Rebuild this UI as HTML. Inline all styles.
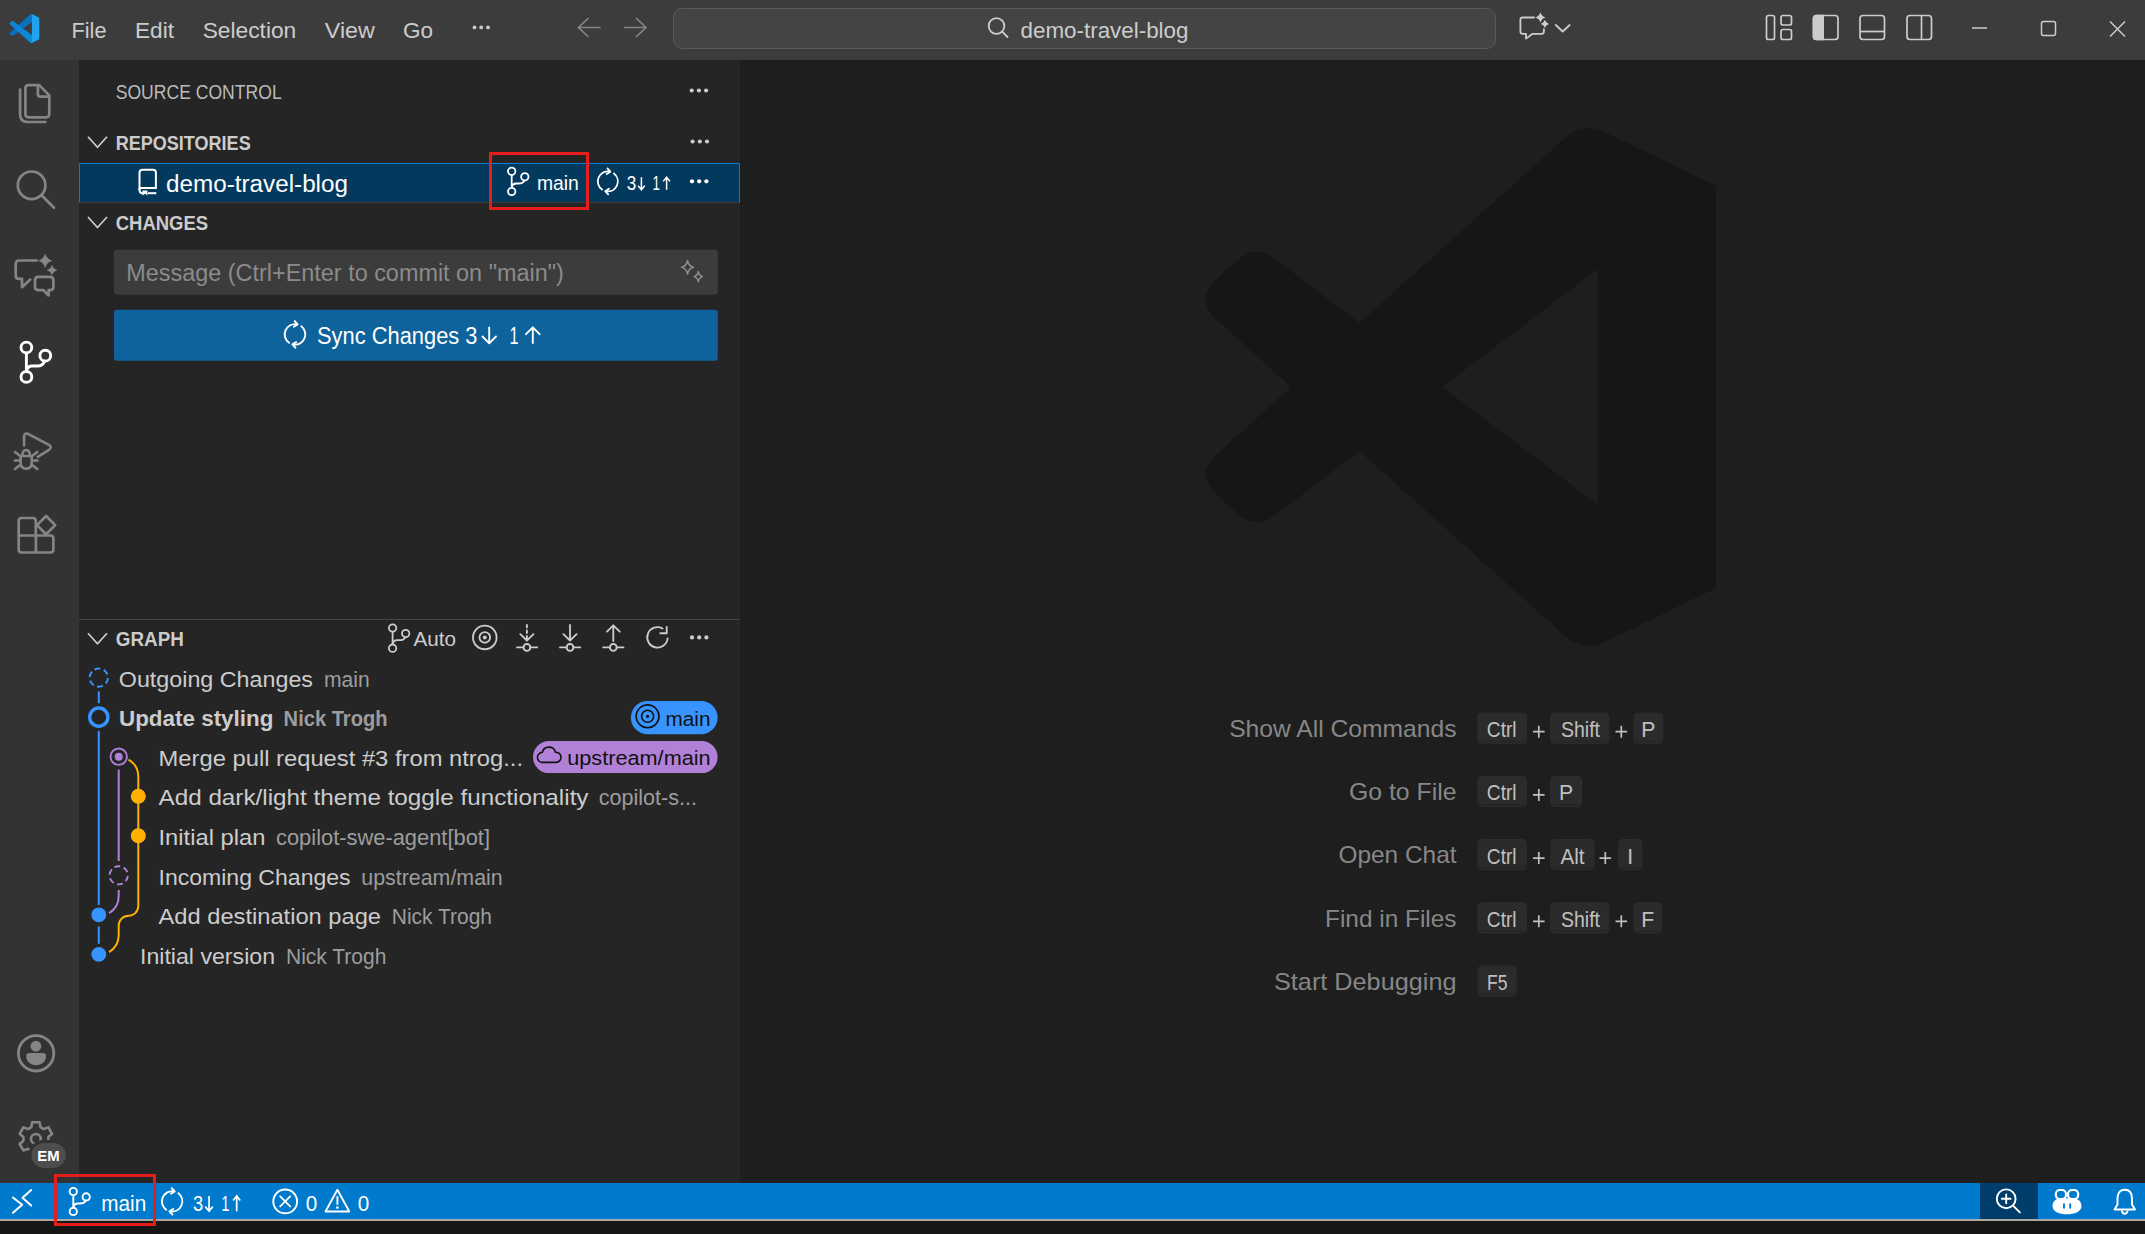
<!DOCTYPE html>
<html><head><meta charset="utf-8"><title>demo-travel-blog - Visual Studio Code</title>
<style>html,body{margin:0;padding:0;background:#161616;overflow:hidden;width:2145px;height:1234px}
svg{display:block} text{font-family:"Liberation Sans", sans-serif;white-space:pre}</style></head>
<body><svg width="2145" height="1234" viewBox="0 0 2145 1234">
<rect x="0" y="0" width="2145" height="1234" fill="#161616" rx="0" />
<rect x="0" y="0" width="2145" height="60" fill="#3c3c3c" rx="0" />
<rect x="0" y="60" width="79" height="1123" fill="#333333" rx="0" />
<rect x="79" y="60" width="661" height="1123" fill="#252526" rx="0" />
<rect x="740" y="60" width="1405" height="1123" fill="#1e1e1e" rx="0" />
<rect x="0" y="1183" width="2145" height="36" fill="#007acc" rx="0" />
<rect x="0" y="1219" width="2145" height="2" fill="#aca8a4" rx="0" />
<g transform="translate(9.7,14) scale(0.296,0.29)"><path d="M96.46 10.8L75.86.88C73.47-.27 70.62.21 68.75 2.08L1.3 63.58c-1.82 1.66-1.81 4.51 0 6.17l5.51 5.01c1.49 1.35 3.72 1.45 5.32.24L93.36 13.37C96.09 11.3 100 13.25 100 16.67v-.24c0-2.4-1.38-4.59-3.54-5.63z" fill="#0a70be"/><path d="M96.46 89.2L75.86 99.12c-2.39 1.15-5.24.67-7.11-1.2L1.3 36.42c-1.82-1.66-1.81-4.51 0-6.17l5.51-5.01c1.49-1.35 3.72-1.45 5.32-.24l81.23 61.62c2.73 2.07 6.64.12 6.64-3.29v.24c0 2.4-1.38 4.59-3.54 5.63z" fill="#0a88d6"/><path d="M75.86 99.13c-2.39 1.15-5.24.66-7.11-1.21C71.06 100.22 75 98.59 75 95.33V4.67c0-3.26-3.94-4.89-6.25-2.59 1.87-1.87 4.72-2.36 7.11-1.21l20.6 9.91A6.25 6.25 0 0 1 100 16.41v67.18c0 2.4-1.38 4.59-3.54 5.63l-20.6 9.91z" fill="#21a3ef"/></g>
<text x="71.5" y="38" font-size="22" fill="#cccccc" textLength="35" lengthAdjust="spacingAndGlyphs" >File</text>
<text x="135" y="38" font-size="22" fill="#cccccc" textLength="39" lengthAdjust="spacingAndGlyphs" >Edit</text>
<text x="202.7" y="38" font-size="22" fill="#cccccc" textLength="93.6" lengthAdjust="spacingAndGlyphs" >Selection</text>
<text x="324.8" y="38" font-size="22" fill="#cccccc" textLength="50" lengthAdjust="spacingAndGlyphs" >View</text>
<text x="403" y="38" font-size="22" fill="#cccccc" textLength="30" lengthAdjust="spacingAndGlyphs" >Go</text>
<circle cx="474.5" cy="27.4" r="1.9" fill="#cccccc"/>
<circle cx="481.2" cy="27.4" r="1.9" fill="#cccccc"/>
<circle cx="488" cy="27.4" r="1.9" fill="#cccccc"/>
<g stroke="#858585" stroke-width="1.7" fill="none" stroke-linecap="round"><path d="M578.5 27.5H600M588 18.5L578.5 27.5L588 36.5"/><path d="M646 27.5H624.5M636.5 18.5L646 27.5L636.5 36.5"/></g>
<rect x="673.5" y="8.5" width="822" height="40" fill="#444444" rx="9" stroke="#5a5a5a" stroke-width="1"/>
<g stroke="#cccccc" stroke-width="1.8" fill="none" stroke-linecap="round"><circle cx="996.5" cy="26" r="7.8"/><path d="M1002.2 31.7L1007.5 37"/></g>
<text x="1020.5" y="37.6" font-size="22" fill="#cccccc" textLength="168" lengthAdjust="spacingAndGlyphs" >demo-travel-blog</text>
<g stroke="#cccccc" stroke-width="1.8" fill="none" stroke-linejoin="round" stroke-linecap="round"><path d="M1534 17.5H1522.6Q1520.4 17.5 1520.4 19.7V31.6Q1520.4 33.8 1522.6 33.8H1526V38.6L1532.5 33.8H1541.7Q1543.9 33.8 1543.9 31.6V29.2"/><path d="M1555.7 25L1562.7 31.5L1569.7 25"/></g>
<path d="M1540.4 12.3Q1541.544 16.356 1545.6000000000001 17.5Q1541.544 18.644 1540.4 22.7Q1539.256 18.644 1535.2 17.5Q1539.256 16.356 1540.4 12.3Z" fill="#cccccc"/>
<path d="M1544.9 19.799999999999997Q1545.8020000000001 22.997999999999998 1549.0 23.9Q1545.8020000000001 24.802 1544.9 28.0Q1543.998 24.802 1540.8000000000002 23.9Q1543.998 22.997999999999998 1544.9 19.799999999999997Z" fill="#cccccc"/>
<g stroke="#cccccc" stroke-width="1.7" fill="none"><rect x="1766.5" y="15.5" width="8" height="24" rx="2"/><rect x="1781" y="15.5" width="10.5" height="9.5" rx="2"/><rect x="1781" y="29.5" width="10.5" height="10" rx="2"/><rect x="1813.5" y="15.5" width="24.5" height="24" rx="3"/><rect x="1860" y="15.5" width="24.5" height="24" rx="3"/><path d="M1860 31.5H1884.5"/><rect x="1907" y="15.5" width="24.5" height="24" rx="3"/><path d="M1921.5 15.5V39.5"/></g>
<path d="M1824 14.65H1816.65Q1812.65 14.65 1812.65 18.65V36.35Q1812.65 40.35 1816.65 40.35H1824Z" fill="#cccccc"/>
<g stroke="#cccccc" stroke-width="1.5" fill="none"><path d="M1972 28H1987"/><rect x="2041.5" y="21.5" width="14" height="14" rx="2"/><path d="M2110 21.5L2125 36.5M2125 21.5L2110 36.5"/></g>
<g stroke="#858585" stroke-width="2.7" fill="none" stroke-linejoin="round" stroke-linecap="round">
<path d="M39.2 85.1H28.6Q25.4 85.1 25.4 88.3V114.1Q25.4 117.3 28.6 117.3H46.1Q49.3 117.3 49.3 114.1V95.4L39.2 85.1Z"/>
<path d="M37.9 85.5V94Q37.9 96.6 40.5 96.6H49"/>
<path d="M20.1 89.6V114.5Q20.1 122 27.6 122H45.3"/>
<circle cx="31.6" cy="185.3" r="13.8"/><path d="M41.5 195.3L54 207.8"/>
<path d="M36.6 260.5H19.2Q15.7 260.5 15.7 264V275.4Q15.7 278.9 19.2 278.9H22V287.2L30.2 279.6"/>
<path d="M38.5 276.8H50Q53.4 276.8 53.4 280.2V286.8Q53.4 290.2 50 290.2H48.6L48.6 295.5L43.5 290.2H38.5Q35 290.2 35 286.8V280.2Q35 276.8 38.5 276.8Z"/>
</g>
<path d="M45.2 253.39999999999998Q46.660000000000004 259.24 52.5 260.7Q46.660000000000004 262.15999999999997 45.2 268.0Q43.74 262.15999999999997 37.900000000000006 260.7Q43.74 259.24 45.2 253.39999999999998Z" fill="#858585"/>
<path d="M52 264.59999999999997Q53.12 269.08 57.6 270.2Q53.12 271.32 52 275.8Q50.88 271.32 46.4 270.2Q50.88 269.08 52 264.59999999999997Z" fill="#858585"/>
<g stroke="#ffffff" stroke-width="2.9" fill="none" stroke-linecap="round"><circle cx="26.4" cy="347.5" r="5.4"/><circle cx="26.4" cy="376.9" r="5.4"/><circle cx="45.3" cy="355.7" r="5.4"/><path d="M26.4 353V371.5"/><path d="M44.6 361Q43 366 37.5 366H32Q28 366 26.4 370.5"/></g>
<g stroke="#858585" stroke-width="2.6" fill="none" stroke-linejoin="round" stroke-linecap="round"><path d="M24.1 445.5V436.5Q24.1 432.5 28 433.8L49 444.8Q52.5 447.3 49 449.8L37.8 456.8"/><path d="M20.6 456V462.5Q20.6 468.6 26.1 468.6Q31.7 468.6 31.7 462.5V456Z"/><path d="M22.5 455.5Q22.5 450 26.1 450Q29.8 450 29.8 455.5"/><path d="M15 452L19.5 455.5M37.3 452L32.8 455.5M14.8 460.5H19.5M32.8 460.5H37.5M15 469L19.5 465.5M37.3 469L32.8 465.5"/></g>
<g stroke="#858585" stroke-width="2.7" fill="none" stroke-linejoin="round"><path d="M35.8 535.5V521Q35.8 518 32.8 518H21.7Q18.7 518 18.7 521V549.5Q18.7 552.5 21.7 552.5H50.4Q53.4 552.5 53.4 549.5V538.5Q53.4 535.5 50.4 535.5H18.7"/><path d="M35.9 535.5V552.5"/><path d="M46.1 516L55.2 525.1L46.1 534.2L37 525.1Z"/></g>
<circle cx="36.1" cy="1053.3" r="17.7" stroke="#858585" stroke-width="2.8" fill="none"/>
<circle cx="35.9" cy="1046.2" r="5.4" fill="#858585"/>
<path d="M26.2 1056Q26.2 1053 29.2 1053H43Q46 1053 46 1056C46 1062 41.5 1065.2 36.1 1065.2C30.7 1065.2 26.2 1062 26.2 1056Z" fill="#858585"/>
<path d="M31.26 1127.18 L32.19 1122.31 L39.61 1122.31 L40.54 1127.18 L43.73 1129.03 L48.41 1127.39 L52.12 1133.82 L48.36 1137.06 L48.36 1140.74 L52.12 1143.98 L48.41 1150.41 L43.73 1148.77 L40.54 1150.62 L39.61 1155.49 L32.19 1155.49 L31.26 1150.62 L28.07 1148.77 L23.39 1150.41 L19.68 1143.98 L23.44 1140.74 L23.44 1137.06 L19.68 1133.82 L23.39 1127.39 L28.07 1129.03Z" stroke="#858585" stroke-width="2.6" fill="none" stroke-linejoin="round"/>
<circle cx="35.9" cy="1138.9" r="4.9" stroke="#858585" stroke-width="2.6" fill="none"/>
<rect x="29.9" y="1141.4" width="37.4" height="28" rx="14" fill="#4d4d4d" stroke="#333333" stroke-width="3"/>
<rect x="31.4" y="1143" width="34.4" height="25" rx="12" fill="#333333" opacity="0"/>
<text x="37.3" y="1161" font-size="15.5" fill="#ffffff" font-weight="700" textLength="22.3" lengthAdjust="spacingAndGlyphs" >EM</text>
<text x="115.7" y="99.1" font-size="20.8" fill="#bbbbbb" textLength="166" lengthAdjust="spacingAndGlyphs" >SOURCE CONTROL</text>
<circle cx="691.7" cy="90.5" r="2.1" fill="#cccccc"/>
<circle cx="698.9" cy="90.5" r="2.1" fill="#cccccc"/>
<circle cx="706.1" cy="90.5" r="2.1" fill="#cccccc"/>
<path d="M88.0 136.7L97.5 147.3L107.0 136.7" stroke="#cccccc" stroke-width="1.7" fill="none"/>
<text x="115.7" y="149.7" font-size="20.3" fill="#cccccc" font-weight="700" textLength="135" lengthAdjust="spacingAndGlyphs" >REPOSITORIES</text>
<circle cx="692.6" cy="141.5" r="2.1" fill="#cccccc"/>
<circle cx="699.8" cy="141.5" r="2.1" fill="#cccccc"/>
<circle cx="707.0" cy="141.5" r="2.1" fill="#cccccc"/>
<rect x="79" y="163" width="661" height="39" fill="#04395e" rx="0" />
<path d="M79.5 202V163.5H739.5V202" fill="none" stroke="#007fd4" stroke-width="1"/>
<rect x="79" y="202" width="661" height="1" fill="#3d3a38" rx="0" />
<g stroke="#ffffff" stroke-width="2" fill="none"><path d="M139.5 190V172.7Q139.5 169.7 142.5 169.7H152.9Q155.9 169.7 155.9 172.7V187.9H139.5"/><path d="M139.5 188V190Q139.5 193.2 142.7 193.2"/><path d="M148 193.2H156.3"/></g>
<path d="M142.4 190.6H147.5V195.5L145 193.8L142.4 195.5Z" fill="#ffffff"/>
<text x="166" y="192" font-size="23" fill="#ffffff" textLength="182" lengthAdjust="spacingAndGlyphs" >demo-travel-blog</text>
<g stroke="#ffffff" stroke-width="1.8" fill="none"><circle cx="511.7" cy="171.3" r="3.7"/><circle cx="511.7" cy="191.5" r="3.7"/><circle cx="524.8" cy="176.8" r="3.7"/><path d="M511.7 175.0V187.8"/><path d="M524.3 180.5Q523.5 183.5 518.2 183.5H516.2Q512.7 183.5 511.7 186.8"/></g>
<text x="536.9" y="189.8" font-size="19.5" fill="#ffffff" textLength="42" lengthAdjust="spacingAndGlyphs" >main</text>
<g stroke="#ffffff" stroke-width="1.8" fill="none" stroke-linecap="round" stroke-linejoin="round"><path d="M602.06 189.59A10 10 0 0 1 609.19 171.50"/><path d="M607.44 168.39L610.38 171.66L606.65 174.00"/><path d="M613.96 173.52A10 10 0 0 1 606.41 191.30"/><path d="M608.16 194.41L605.22 191.14L608.95 188.80"/></g>
<text x="626.7" y="189.8" font-size="19.5" fill="#ffffff" textLength="9.5" lengthAdjust="spacingAndGlyphs" >3</text>
<text x="652.5" y="189.8" font-size="19.5" fill="#ffffff" textLength="7.5" lengthAdjust="spacingAndGlyphs" >1</text>
<path d="M641.40 177.2V189.20000000000002M638 185.60000000000002L641.40 189.8L644.8 185.60000000000002M666.60 189.8V177.79999999999998M663.2 181.39999999999998L666.60 177.2L670 181.39999999999998" stroke="#ffffff" stroke-width="1.5" fill="none" stroke-linecap="butt" stroke-linejoin="miter"/>
<circle cx="692.0" cy="181.3" r="2.1" fill="#ffffff"/>
<circle cx="699.2" cy="181.3" r="2.1" fill="#ffffff"/>
<circle cx="706.4" cy="181.3" r="2.1" fill="#ffffff"/>
<rect x="490.5" y="153.5" width="97" height="55" fill="none" stroke="#e51d1d" stroke-width="3"/>
<path d="M88.0 217.0L97.5 227.60000000000002L107.0 217.0" stroke="#cccccc" stroke-width="1.7" fill="none"/>
<text x="115.7" y="230" font-size="20.3" fill="#cccccc" font-weight="700" textLength="92.5" lengthAdjust="spacingAndGlyphs" >CHANGES</text>
<rect x="114" y="249.8" width="603.8" height="45" fill="#3c3c3c" rx="3" />
<text x="126.3" y="281.2" font-size="23.5" fill="#8b8b8b" textLength="437.5" lengthAdjust="spacingAndGlyphs" >Message (Ctrl+Enter to commit on &quot;main&quot;)</text>
<path d="M686.5 260.5Q688.18 264.82 692.5 266.5Q688.18 268.18 686.5 272.5Q684.82 268.18 680.5 266.5Q684.82 264.82 686.5 260.5Z" fill="none"/>
<g stroke="#8b8b8b" stroke-width="1.5" fill="none" stroke-linejoin="round"><path d="M687.5 260.5Q688.5 266 693.5 267.3Q688.5 268.6 687.5 274Q686.5 268.6 681.5 267.3Q686.5 266 687.5 260.5Z"/><path d="M698.3 271.5Q699 275.5 702.5 276.6Q699 277.7 698.3 281.7Q697.6 277.7 694.1 276.6Q697.6 275.5 698.3 271.5Z"/></g>
<rect x="114" y="309.7" width="603.8" height="51.1" fill="#0e639c" rx="3" />
<g stroke="#ffffff" stroke-width="1.9" fill="none" stroke-linecap="round" stroke-linejoin="round"><path d="M289.09 342.84A10.3 10.3 0 0 1 296.43 324.20"/><path d="M294.68 321.10L297.62 324.37L293.89 326.70"/><path d="M301.34 326.28A10.3 10.3 0 0 1 293.57 344.60"/><path d="M295.32 347.70L292.38 344.43L296.11 342.10"/></g>
<text x="317" y="344.3" font-size="23.5" fill="#ffffff" textLength="160.5" lengthAdjust="spacingAndGlyphs" >Sync Changes 3</text>
<g stroke="#ffffff" stroke-width="1.9" fill="none" stroke-linecap="round" stroke-linejoin="round"><path d="M489.2 327.5V343M482.5 336.5L489.2 343.3L496 336.5"/><path d="M532.8 343V327.5M526 334.2L532.8 327.3L539.6 334.2"/></g>
<text x="509.4" y="344.3" font-size="23.5" fill="#ffffff" textLength="9" lengthAdjust="spacingAndGlyphs" >1</text>
<rect x="79" y="619" width="661" height="1" fill="#454545" rx="0" />
<path d="M88.0 633.2L97.5 643.8L107.0 633.2" stroke="#cccccc" stroke-width="1.7" fill="none"/>
<text x="115.8" y="646.2" font-size="20.3" fill="#cccccc" font-weight="700" textLength="68" lengthAdjust="spacingAndGlyphs" >GRAPH</text>
<g stroke="#cccccc" stroke-width="1.8" fill="none"><circle cx="392.6" cy="628" r="3.7"/><circle cx="392.6" cy="648.2" r="3.7"/><circle cx="405.70000000000005" cy="633.5" r="3.7"/><path d="M392.6 631.7V644.5"/><path d="M405.20000000000005 637.2Q404.40000000000003 640.2 399.1 640.2H397.1Q393.6 640.2 392.6 643.5"/></g>
<text x="413.6" y="646" font-size="20.6" fill="#cccccc" textLength="42.5" lengthAdjust="spacingAndGlyphs" >Auto</text>
<g stroke="#cccccc" stroke-width="1.85" fill="none" stroke-linecap="round" stroke-linejoin="round"><circle cx="484.8" cy="637.4" r="11.8"/><circle cx="484.8" cy="637.4" r="5.3"/><path d="M526.9 625V627.5M526.9 630.5V633M526.9 636V640.3M520.3 634.2L526.9 640.5L533.5 634.2"/><circle cx="526.9" cy="647.4" r="3.4"/><path d="M517 647.4H523.5M530.3 647.4H537.2"/><path d="M570 625V640.3M563.4 634.2L570 640.5L576.6 634.2"/><circle cx="570" cy="647.4" r="3.4"/><path d="M560 647.4H566.6M573.4 647.4H580.2"/><path d="M613.3 641V625.5M607 631.7L613.3 625.3L619.7 631.7"/><circle cx="613.3" cy="647.4" r="3.4"/><path d="M603.2 647.4H609.9M616.7 647.4H623.5"/><path d="M662.5 628.5A10.2 10.2 0 1 0 667.6 638.5"/><path d="M660.3 633.2H666.7V626.8"/></g>
<circle cx="484.8" cy="637.4" r="2" fill="#cccccc"/>
<circle cx="692.0" cy="637.4" r="2.1" fill="#cccccc"/>
<circle cx="699.2" cy="637.4" r="2.1" fill="#cccccc"/>
<circle cx="706.4" cy="637.4" r="2.1" fill="#cccccc"/>
<g fill="none" stroke-width="2">
<path d="M98.8 691.5V703.2" stroke="#3794ff"/>
<path d="M98.8 731V905M98.8 926.5V943.8" stroke="#3794ff"/>
<path d="M118.7 769.5V861M118.7 890V895.7A19.9 19.9 0 0 1 109.05 913.1" stroke="#b180d7"/>
<path d="M128.5 759.6A19.6 19.6 0 0 1 138.3 776.6V906A9.7 9.7 0 0 1 128.6 915.7A9.9 9.9 0 0 0 118.7 925.6V935A19.9 19.9 0 0 1 109.05 952.06" stroke="#ffb000"/>
</g>
<circle cx="98.8" cy="677.6" r="9.1" fill="none" stroke="#3794ff" stroke-width="2" stroke-dasharray="5.9 3.63" transform="rotate(-118 98.8 677.6)"/>
<circle cx="98.8" cy="717.14" r="9.1" fill="#252526" stroke="#3794ff" stroke-width="3.4"/>
<circle cx="118.7" cy="756.6800000000001" r="8.2" fill="#252526" stroke="#b180d7" stroke-width="1.9"/>
<circle cx="118.7" cy="756.6800000000001" r="4" fill="#b180d7"/>
<circle cx="138.3" cy="796.22" r="7.5" fill="#ffb000"/>
<circle cx="138.3" cy="835.76" r="7.5" fill="#ffb000"/>
<circle cx="118.7" cy="875.3" r="9.1" fill="none" stroke="#b180d7" stroke-width="1.9" stroke-dasharray="5.9 3.63" transform="rotate(-118 118.7 875.3)"/>
<circle cx="98.8" cy="914.84" r="7.4" fill="#3794ff"/>
<circle cx="98.8" cy="954.38" r="7.4" fill="#3794ff"/>
<text x="118.8" y="686.8000000000001" font-size="22.7" fill="#cccccc" textLength="194.2" lengthAdjust="spacingAndGlyphs" >Outgoing Changes</text>
<text x="324" y="686.8000000000001" font-size="22.7" fill="#9d9d9d" textLength="45.7" lengthAdjust="spacingAndGlyphs" >main</text>
<text x="119" y="726.34" font-size="22.7" fill="#cccccc" font-weight="700" textLength="154.4" lengthAdjust="spacingAndGlyphs" >Update styling</text>
<text x="283.6" y="726.34" font-size="22.7" fill="#9d9d9d" font-weight="700" textLength="104" lengthAdjust="spacingAndGlyphs" >Nick Trogh</text>
<text x="158.5" y="765.8800000000001" font-size="22.7" fill="#cccccc" textLength="364.5" lengthAdjust="spacingAndGlyphs" >Merge pull request #3 from ntrog...</text>
<text x="158.5" y="805.4200000000001" font-size="22.7" fill="#cccccc" textLength="430" lengthAdjust="spacingAndGlyphs" >Add dark/light theme toggle functionality</text>
<text x="598.7" y="805.4200000000001" font-size="22.7" fill="#9d9d9d" textLength="98.3" lengthAdjust="spacingAndGlyphs" >copilot-s...</text>
<text x="158.5" y="844.96" font-size="22.7" fill="#cccccc" textLength="107" lengthAdjust="spacingAndGlyphs" >Initial plan</text>
<text x="276" y="844.96" font-size="22.7" fill="#9d9d9d" textLength="214" lengthAdjust="spacingAndGlyphs" >copilot-swe-agent[bot]</text>
<text x="158.5" y="884.5" font-size="22.7" fill="#cccccc" textLength="192.1" lengthAdjust="spacingAndGlyphs" >Incoming Changes</text>
<text x="361.3" y="884.5" font-size="22.7" fill="#9d9d9d" textLength="141.4" lengthAdjust="spacingAndGlyphs" >upstream/main</text>
<text x="158.5" y="924.0400000000001" font-size="22.7" fill="#cccccc" textLength="222.5" lengthAdjust="spacingAndGlyphs" >Add destination page</text>
<text x="391.8" y="924.0400000000001" font-size="22.7" fill="#9d9d9d" textLength="100.2" lengthAdjust="spacingAndGlyphs" >Nick Trogh</text>
<text x="140" y="963.58" font-size="22.7" fill="#cccccc" textLength="135" lengthAdjust="spacingAndGlyphs" >Initial version</text>
<text x="286" y="963.58" font-size="22.7" fill="#9d9d9d" textLength="100.4" lengthAdjust="spacingAndGlyphs" >Nick Trogh</text>
<rect x="630.9" y="701" width="86.7" height="33.2" fill="#3794ff" rx="16.6" />
<g stroke="#111111" stroke-width="1.6" fill="none"><circle cx="647.6" cy="716.3" r="11.4"/><circle cx="647.6" cy="716.3" r="6"/></g>
<circle cx="647.6" cy="716.3" r="1.6" fill="#111111"/>
<text x="665.5" y="725.7" font-size="20.5" fill="#111111" textLength="45" lengthAdjust="spacingAndGlyphs" >main</text>
<rect x="533" y="741" width="184.6" height="32.1" fill="#b180d7" rx="16" />
<path d="M542.5 762.4A5 5 0 0 1 542.3 752.4A6.8 6.8 0 0 1 555.5 752.2A5.1 5.1 0 0 1 556.3 762.4Z" fill="none" stroke="#111111" stroke-width="1.6" stroke-linejoin="round"/>
<text x="567.2" y="765.4" font-size="20.5" fill="#111111" textLength="143.5" lengthAdjust="spacingAndGlyphs" >upstream/main</text>
<path fill="#161616" fill-rule="evenodd" d="M1716 186L1716 588L1605.9 641.5Q1583.5 652.5 1564.9 635.8L1359.5 451L1275.5 515.1Q1255.6 530.3 1237.1 513.4L1216.6 494.5Q1194.5 474.3 1216.7 454.2L1291 387L1216.7 319.8Q1194.5 299.7 1216.6 279.5L1237.1 260.6Q1255.6 243.7 1275.5 258.9L1359.5 323L1564.9 138.2Q1583.5 121.5 1605.9 132.5Z M1598 269L1442 387L1598 505Z"/>
<text x="1456.5" y="736.9" font-size="24" fill="#878787" text-anchor="end" textLength="227.3" lengthAdjust="spacingAndGlyphs" >Show All Commands</text>
<rect x="1477.8" y="713.2" width="48.600000000000136" height="30" rx="4" fill="#262626" stroke="#303030" stroke-width="1"/>
<rect x="1478.3" y="713.7" width="47.600000000000136" height="27" rx="3.5" fill="#2b2b2b"/>
<text x="1486.8" y="737.2" font-size="21.2" fill="#c0c0c0" textLength="29.8" lengthAdjust="spacingAndGlyphs" >Ctrl</text>
<path d="M1533 731.6999999999999H1544.6M1538.8 725.6999999999999V737.6999999999999" stroke="#c0c0c0" stroke-width="1.7"/>
<rect x="1550.7" y="713.2" width="58.200000000000045" height="30" rx="4" fill="#262626" stroke="#303030" stroke-width="1"/>
<rect x="1551.2" y="713.7" width="57.200000000000045" height="27" rx="3.5" fill="#2b2b2b"/>
<text x="1560.9" y="737.2" font-size="21.2" fill="#c0c0c0" textLength="39.1" lengthAdjust="spacingAndGlyphs" >Shift</text>
<path d="M1615.5 731.6999999999999H1627.1M1621.3 725.6999999999999V737.6999999999999" stroke="#c0c0c0" stroke-width="1.7"/>
<rect x="1633.9" y="713.2" width="28.799999999999955" height="30" rx="4" fill="#262626" stroke="#303030" stroke-width="1"/>
<rect x="1634.4" y="713.7" width="27.799999999999955" height="27" rx="3.5" fill="#2b2b2b"/>
<text x="1648.3000000000002" y="737.2" font-size="21.2" fill="#c0c0c0" text-anchor="middle" >P</text>
<text x="1456.5" y="800.1" font-size="24" fill="#878787" text-anchor="end" textLength="107.6" lengthAdjust="spacingAndGlyphs" >Go to File</text>
<rect x="1477.8" y="776.4000000000001" width="48.600000000000136" height="30" rx="4" fill="#262626" stroke="#303030" stroke-width="1"/>
<rect x="1478.3" y="776.9000000000001" width="47.600000000000136" height="27" rx="3.5" fill="#2b2b2b"/>
<text x="1486.8" y="800.4000000000001" font-size="21.2" fill="#c0c0c0" textLength="29.8" lengthAdjust="spacingAndGlyphs" >Ctrl</text>
<path d="M1533 794.9H1544.6M1538.8 788.9V800.9" stroke="#c0c0c0" stroke-width="1.7"/>
<rect x="1550.7" y="776.4000000000001" width="30.799999999999955" height="30" rx="4" fill="#262626" stroke="#303030" stroke-width="1"/>
<rect x="1551.2" y="776.9000000000001" width="29.799999999999955" height="27" rx="3.5" fill="#2b2b2b"/>
<text x="1566.1" y="800.4000000000001" font-size="21.2" fill="#c0c0c0" text-anchor="middle" >P</text>
<text x="1456.5" y="863.3" font-size="24" fill="#878787" text-anchor="end" textLength="118" lengthAdjust="spacingAndGlyphs" >Open Chat</text>
<rect x="1477.8" y="839.6" width="48.600000000000136" height="30" rx="4" fill="#262626" stroke="#303030" stroke-width="1"/>
<rect x="1478.3" y="840.1" width="47.600000000000136" height="27" rx="3.5" fill="#2b2b2b"/>
<text x="1486.8" y="863.6" font-size="21.2" fill="#c0c0c0" textLength="29.8" lengthAdjust="spacingAndGlyphs" >Ctrl</text>
<path d="M1533 858.0999999999999H1544.6M1538.8 852.0999999999999V864.0999999999999" stroke="#c0c0c0" stroke-width="1.7"/>
<rect x="1551.0" y="839.6" width="43.0" height="30" rx="4" fill="#262626" stroke="#303030" stroke-width="1"/>
<rect x="1551.5" y="840.1" width="42.0" height="27" rx="3.5" fill="#2b2b2b"/>
<text x="1560.5" y="863.6" font-size="21.2" fill="#c0c0c0" textLength="24" lengthAdjust="spacingAndGlyphs" >Alt</text>
<path d="M1599.5 858.0999999999999H1611.1M1605.3 852.0999999999999V864.0999999999999" stroke="#c0c0c0" stroke-width="1.7"/>
<rect x="1618.8" y="839.6" width="22.90000000000009" height="30" rx="4" fill="#262626" stroke="#303030" stroke-width="1"/>
<rect x="1619.3" y="840.1" width="21.90000000000009" height="27" rx="3.5" fill="#2b2b2b"/>
<text x="1630.25" y="863.6" font-size="21.2" fill="#c0c0c0" text-anchor="middle" >I</text>
<text x="1456.5" y="926.5" font-size="24" fill="#878787" text-anchor="end" textLength="131.5" lengthAdjust="spacingAndGlyphs" >Find in Files</text>
<rect x="1477.8" y="902.8000000000001" width="48.600000000000136" height="30" rx="4" fill="#262626" stroke="#303030" stroke-width="1"/>
<rect x="1478.3" y="903.3000000000001" width="47.600000000000136" height="27" rx="3.5" fill="#2b2b2b"/>
<text x="1486.8" y="926.8000000000001" font-size="21.2" fill="#c0c0c0" textLength="29.8" lengthAdjust="spacingAndGlyphs" >Ctrl</text>
<path d="M1533 921.3H1544.6M1538.8 915.3V927.3" stroke="#c0c0c0" stroke-width="1.7"/>
<rect x="1550.7" y="902.8000000000001" width="58.200000000000045" height="30" rx="4" fill="#262626" stroke="#303030" stroke-width="1"/>
<rect x="1551.2" y="903.3000000000001" width="57.200000000000045" height="27" rx="3.5" fill="#2b2b2b"/>
<text x="1560.9" y="926.8000000000001" font-size="21.2" fill="#c0c0c0" textLength="39.1" lengthAdjust="spacingAndGlyphs" >Shift</text>
<path d="M1615.5 921.3H1627.1M1621.3 915.3V927.3" stroke="#c0c0c0" stroke-width="1.7"/>
<rect x="1633.9" y="902.8000000000001" width="27.899999999999864" height="30" rx="4" fill="#262626" stroke="#303030" stroke-width="1"/>
<rect x="1634.4" y="903.3000000000001" width="26.899999999999864" height="27" rx="3.5" fill="#2b2b2b"/>
<text x="1647.85" y="926.8000000000001" font-size="21.2" fill="#c0c0c0" text-anchor="middle" >F</text>
<text x="1456.5" y="989.7" font-size="24" fill="#878787" text-anchor="end" textLength="182.5" lengthAdjust="spacingAndGlyphs" >Start Debugging</text>
<rect x="1478.1" y="966.0000000000001" width="38.0" height="30" rx="4" fill="#262626" stroke="#303030" stroke-width="1"/>
<rect x="1478.6" y="966.5000000000001" width="37.0" height="27" rx="3.5" fill="#2b2b2b"/>
<text x="1487" y="990.0000000000001" font-size="21.2" fill="#c0c0c0" textLength="20.5" lengthAdjust="spacingAndGlyphs" >F5</text>
<g stroke="#ffffff" stroke-width="2" fill="none" stroke-linecap="round" stroke-linejoin="round"><path d="M12.9 1197.5L22.2 1204.7L12.9 1212.8"/><path d="M31.2 1190L22.5 1197.8L31.2 1205.6"/></g>
<g stroke="#ffffff" stroke-width="1.9" fill="none"><circle cx="73.3" cy="1191.5" r="3.6445000000000003"/><circle cx="73.3" cy="1211.397" r="3.6445000000000003"/><circle cx="86.20349999999999" cy="1196.9175" r="3.6445000000000003"/><path d="M73.3 1195.1445V1207.7524999999998"/><path d="M85.711 1200.5620000000001Q84.923 1203.517 79.7025 1203.517H77.7325Q74.285 1203.517 73.3 1206.7675"/></g>
<text x="101.2" y="1211" font-size="21.5" fill="#ffffff" textLength="45" lengthAdjust="spacingAndGlyphs" >main</text>
<g stroke="#ffffff" stroke-width="1.9" fill="none" stroke-linecap="round" stroke-linejoin="round"><path d="M166.25 1209.76A10.2 10.2 0 0 1 173.52 1191.30"/><path d="M171.76 1188.20L174.71 1191.47L170.98 1193.80"/><path d="M178.38 1193.36A10.2 10.2 0 0 1 170.68 1211.50"/><path d="M172.44 1214.60L169.49 1211.33L173.22 1209.00"/></g>
<text x="192.9" y="1211" font-size="22" fill="#ffffff" textLength="10.2" lengthAdjust="spacingAndGlyphs" >3</text>
<text x="221.5" y="1211" font-size="22" fill="#ffffff" textLength="7.8" lengthAdjust="spacingAndGlyphs" >1</text>
<path d="M209.05 1195.9V1210.6000000000001M205.3 1206.6000000000001L209.05 1211.2L212.8 1206.6000000000001M236.70 1211.2V1196.5M233.2 1200.5L236.70 1195.9L240.2 1200.5" stroke="#ffffff" stroke-width="1.7" fill="none" stroke-linecap="butt" stroke-linejoin="miter"/>
<g stroke="#ffffff" stroke-width="1.9" fill="none" stroke-linecap="round" stroke-linejoin="round"><circle cx="285.2" cy="1201.4" r="11.9"/><path d="M280.2 1196.4L290.2 1206.4M290.2 1196.4L280.2 1206.4"/><path d="M337.4 1189.8L349.3 1211.5H325.5Z"/><path d="M337.4 1197V1204"/></g>
<circle cx="337.4" cy="1207.6" r="1.3" fill="#ffffff"/>
<text x="305.8" y="1211" font-size="22" fill="#ffffff" textLength="11.5" lengthAdjust="spacingAndGlyphs" >0</text>
<text x="357.7" y="1211" font-size="22" fill="#ffffff" textLength="11.5" lengthAdjust="spacingAndGlyphs" >0</text>
<rect x="55.5" y="1175.5" width="99" height="49" fill="none" stroke="#e51d1d" stroke-width="3"/>
<rect x="1980" y="1183" width="58" height="36" fill="#003d6b" rx="0" />
<g stroke="#ffffff" stroke-width="1.9" fill="none" stroke-linecap="round"><circle cx="2006.2" cy="1198.8" r="9.4"/><path d="M2001.8 1198.8H2010.6M2006.2 1194.4V1203.2M2013.3 1205.9L2019.8 1212.4"/></g>
<g fill="#ffffff"><path d="M2067 1198.5C2062 1196.5 2052.5 1198.5 2052.5 1206C2052.5 1212 2060 1214.3 2067 1214.3C2074 1214.3 2081.5 1212 2081.5 1206C2081.5 1198.5 2072 1196.5 2067 1198.5Z"/></g>
<g stroke="#ffffff" stroke-width="2.2" fill="#007acc"><rect x="2055.8" y="1190" width="10.2" height="9" rx="4"/><rect x="2068" y="1190" width="10.2" height="9" rx="4"/></g>
<g stroke="#007acc" stroke-width="1.9" stroke-linecap="round"><path d="M2064 1204.3V1207.7M2070.2 1204.3V1207.7"/></g>
<g stroke="#ffffff" stroke-width="1.9" fill="none" stroke-linejoin="round"><path d="M2124.7 1189.8C2119.5 1189.8 2117.5 1194 2117.5 1198.5V1204.5L2114.5 1209.5H2135L2132 1204.5V1198.5C2132 1194 2130 1189.8 2124.7 1189.8Z"/><path d="M2121.8 1210.5Q2122.3 1213.8 2124.7 1213.8Q2127.2 1213.8 2127.6 1210.5"/></g>
</svg></body></html>
